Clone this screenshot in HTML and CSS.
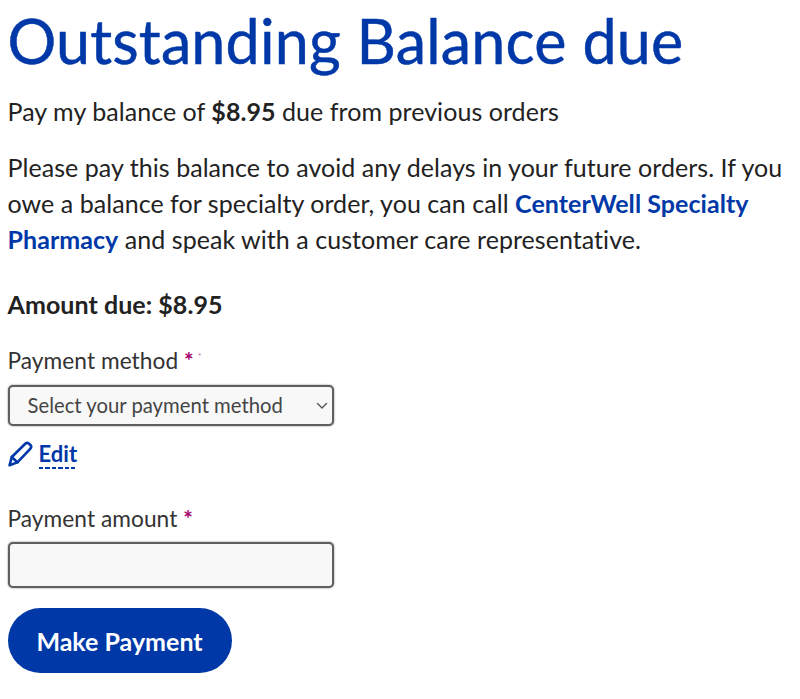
FILE: index.html
```html
<!DOCTYPE html>
<html lang="en">
<head>
    <meta charset="UTF-8">
    <meta name="viewport" content="width=device-width, initial-scale=1.0">
    <title>Outstanding Balance due</title>
    <link rel="stylesheet" href="styles.css">
</head>
<body>
    <div class="container">
        <h1>Outstanding Balance due</h1>
        <p class="intro">Pay my balance of <strong>$8.95</strong> due from previous orders</p>
        <p class="info">Please pay this balance to avoid any delays in your future orders. If you owe a balance for specialty order, you can call <a href="#" class="link">CenterWell Specialty</a> <a href="#" class="link">Pharmacy</a> and speak with a customer care representative.</p>
        <p class="amount-due">Amount due: $8.95</p>

        <form class="payment-form">
            <div class="form-group">
                <label for="method">Payment method <span class="req">*</span><span class="req-small">*</span></label>
                <div class="select-wrap">
                    <select id="method">
                        <option>Select your payment method</option>
                    </select>
                    <svg class="chevron" width="12" height="8" viewBox="0 0 12 8" fill="none" stroke="#555" stroke-width="1.4" stroke-linecap="round" stroke-linejoin="round">
                        <path d="M1.5 1.5L6 6l4.5-4.5"/>
                    </svg>
                </div>
            </div>
            <div class="edit-row">
                <svg class="edit-icon" width="25" height="26" viewBox="0 0 25 26" fill="none" stroke="#0038a8" stroke-width="2.6" stroke-linejoin="round" stroke-linecap="round">
                    <path d="M1.6 24.2l2.2-8.2L17 3c1.4-1.3 2.8-1.4 4-.3l1.4 1.3c1.1 1.2 1 2.6-.2 3.9L9.4 21.4z"/>
                    <path d="M3.8 16l5.6 5.4"/>
                </svg>
                <a href="#" class="edit-link">Edit</a>
            </div>
            <div class="form-group amount-group">
                <label for="amount">Payment amount <span class="req">*</span></label>
                <input type="text" id="amount">
            </div>
            <button type="button" class="btn">Make Payment</button>
        </form>
    </div>
</body>
</html>
```

FILE: styles.css
```css
body { margin: 0; background: #fff; color: #222; font-family: "Lato", "Liberation Sans", sans-serif; font-size: 25px; letter-spacing: 0.05px; line-height: 36px; -webkit-font-smoothing: antialiased; }
.container { padding: 0 7.5px; }
h1 { margin: 0; padding-top: 7px; color: #0038a8; font-size: 61px; letter-spacing: 0.17px; font-weight: 400; line-height: 68px; -webkit-text-stroke: 0.5px #0038a8; }
p { margin: 0; }
.intro { margin-top: 18px; }
.info { margin-top: 20px; }
.link { color: #0038a8; font-weight: 700; text-decoration: none; }
.amount-due { margin-top: 29px; font-weight: 700; }
.payment-form { margin-top: 21px; }
label { display: block; color: #333; font-size: 22.7px; line-height: 36px; }
.req { color: #a3006b; font-weight: 700; }
.req-small { margin-left: 4px; color: #c77aa8; font-size: 9px; vertical-align: super; line-height: 0; }
.select-wrap { position: relative; width: 326px; margin-top: 6px; }
.chevron { position: absolute; top: 17px; right: 6px; pointer-events: none; }
select, input { display: block; box-sizing: border-box; width: 326px; border: 2px solid #5f5f5f; border-radius: 5px; background-color: #f8f8f8; box-shadow: 0 0 2px #777; }
select { appearance: none; height: 41px; padding: 0 0 2px 18px; color: #444; font-family: inherit; font-size: 20.3px; }
input { height: 46px; margin-top: 5px; }
.edit-row { display: flex; align-items: center; gap: 6px; height: 36px; margin-top: 10px; }
.edit-link { padding-bottom: 1px; background: repeating-linear-gradient(to right, #0038a8 0 4.5px, transparent 4.5px 6.4px) left bottom / 100% 2px no-repeat; color: #0038a8; font-size: 22px; font-weight: 700; line-height: 28px; text-decoration: none; }
.amount-group { margin-top: 29px; }
.btn { display: block; width: 224px; height: 65px; margin-top: 20px; border: none; border-radius: 33px; background: #0038a8; color: #fff; font-family: inherit; font-size: 25px; font-weight: 700; cursor: pointer; }
```
